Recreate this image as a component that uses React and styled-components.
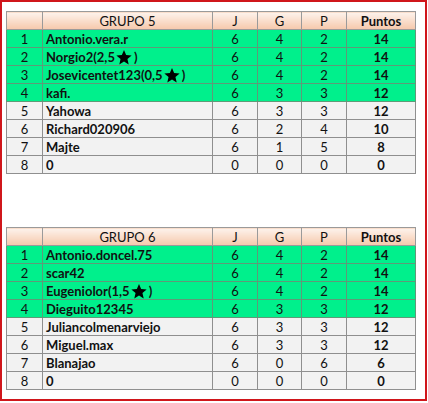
import React from "react";
import styled, { createGlobalStyle } from "styled-components";

const GlobalStyle = createGlobalStyle`
  html, body {
    margin: 0;
    padding: 0;
    background: #ffffff;
  }
  body {
    font-family: Lato, "Liberation Sans", Arial, sans-serif;
  }
`;

const Frame = styled.div`
  box-sizing: border-box;
  width: 427px;
  height: 401px;
  border: 2px solid #d0161b;
  padding: 9px 0 0 4px;
  display: flex;
  flex-direction: column;
  gap: 53px;
`;

const Table = styled.table`
  border-collapse: collapse;
  table-layout: fixed;
  width: 410px;
  font-size: 13px;
  color: #111111;
`;

const HeadCell = styled.th`
  height: 17px;
  padding: 0;
  border: 1px solid #9a9a9a;
  background: linear-gradient(#fdf3ec, #f6c8ab);
  font-weight: ${(p) => (p.$bold ? 700 : 400)};
  text-align: center;
  line-height: 16px;
`;

const Row = styled.tr`
  background: ${(p) => (p.$top ? "#00f08c" : "#f2f2f2")};
`;

const Cell = styled.td`
  height: 17px;
  padding: 0 ${(p) => (p.$left ? "3px" : "0")};
  border: 1px solid ${(p) => (p.$top ? "#5f9a78" : "#8f8f8f")};
  text-align: ${(p) => (p.$left ? "left" : "center")};
  font-weight: ${(p) => (p.$bold ? 700 : 400)};
  line-height: 16px;
  white-space: nowrap;
  overflow: hidden;
`;

const StarIcon = styled.svg`
  width: 16px;
  height: 15px;
  margin: 0 2px 0 1px;
  vertical-align: -3px;
`;

const groups = [
  {
    title: "GRUPO 5",
    rows: [
      ["Antonio.vera.r", 6, 4, 2, 14],
      ["Norgio2(2,5*)", 6, 4, 2, 14],
      ["Josevicentet123(0,5*)", 6, 4, 2, 14],
      ["kafi.", 6, 3, 3, 12],
      ["Yahowa", 6, 3, 3, 12],
      ["Richard020906", 6, 2, 4, 10],
      ["Majte", 6, 1, 5, 8],
      ["0", 0, 0, 0, 0],
    ],
  },
  {
    title: "GRUPO 6",
    rows: [
      ["Antonio.doncel.75", 6, 4, 2, 14],
      ["scar42", 6, 4, 2, 14],
      ["Eugeniolor(1,5*)", 6, 4, 2, 14],
      ["Dieguito12345", 6, 3, 3, 12],
      ["Juliancolmenarviejo", 6, 3, 3, 12],
      ["Miguel.max", 6, 3, 3, 12],
      ["Blanajao", 6, 0, 6, 6],
      ["0", 0, 0, 0, 0],
    ],
  },
];

function Star() {
  return (
    <StarIcon viewBox="0 0 24 23">
      <path
        fill="#000"
        d="M12 0l3.3 7.6 8.4.8-6.4 5.5 1.9 8.2L12 17.8l-7.2 4.3 1.9-8.2L.3 8.4l8.4-.8z"
      />
    </StarIcon>
  );
}

// the "*" in the name stands for the black star
function Name({ text }) {
  const parts = text.split("*");
  if (parts.length === 1) return text;
  return (
    <>
      {parts[0]}
      <Star />
      {parts[1]}
    </>
  );
}

function GroupTable({ title, rows }) {
  return (
    <Table>
      <colgroup>
        <col style={{ width: 36 }} />
        <col style={{ width: 170 }} />
        <col style={{ width: 45 }} />
        <col style={{ width: 44 }} />
        <col style={{ width: 45 }} />
        <col style={{ width: 69 }} />
      </colgroup>
      <thead>
        <tr>
          <HeadCell />
          <HeadCell>{title}</HeadCell>
          <HeadCell>J</HeadCell>
          <HeadCell>G</HeadCell>
          <HeadCell>P</HeadCell>
          <HeadCell $bold>Puntos</HeadCell>
        </tr>
      </thead>
      <tbody>
        {rows.map(([name, j, g, p, pts], i) => {
          const top = i < 4;
          return (
            <Row key={i} $top={top}>
              <Cell $top={top}>{i + 1}</Cell>
              <Cell $top={top} $left $bold>
                <Name text={name} />
              </Cell>
              <Cell $top={top}>{j}</Cell>
              <Cell $top={top}>{g}</Cell>
              <Cell $top={top}>{p}</Cell>
              <Cell $top={top} $bold>{pts}</Cell>
            </Row>
          );
        })}
      </tbody>
    </Table>
  );
}

export default function App() {
  return (
    <>
      <GlobalStyle />
      <Frame>
        {groups.map((g) => (
          <GroupTable key={g.title} title={g.title} rows={g.rows} />
        ))}
      </Frame>
    </>
  );
}
